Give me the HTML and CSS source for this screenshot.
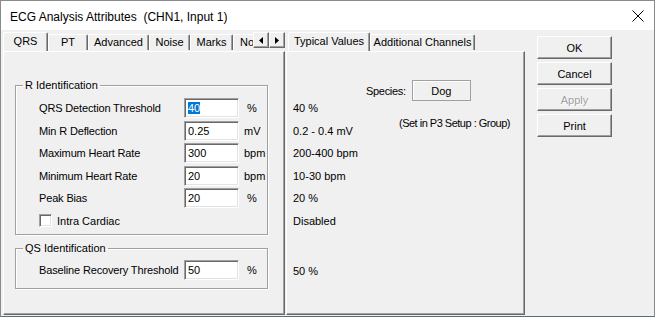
FILE: index.html
```html
<!DOCTYPE html>
<html lang="en">
<head>
    <meta charset="UTF-8">
    <title>ECG Analysis Attributes</title>
    <link rel="stylesheet" href="styles.css">
</head>
<body>
<div class="window">
    <div class="titlebar">
        <span class="title">ECG Analysis Attributes&nbsp; (CHN1, Input 1)</span>
        <svg class="close" width="12" height="12" viewBox="0 0 12 12">
            <path d="M0.5 0.5 L11.5 11.5 M11.5 0.5 L0.5 11.5" stroke="#000" stroke-width="1" fill="none"/>
        </svg>
    </div>

    <div class="client">
        <!-- left tab control: analysis settings -->
        <div class="tabctl tabctl-left">
            <div class="tabrow">
                <div class="tabstrip">
                    <div class="tab active t-qrs">QRS</div>
                    <div class="tab t-pt">PT</div>
                    <div class="tab t-adv">Advanced</div>
                    <div class="tab t-noise">Noise</div>
                    <div class="tab t-marks">Marks</div>
                    <div class="tab t-notes">No</div>
                </div>
                <div class="scroller">
                    <div class="arrow">
                        <svg width="5" height="7" viewBox="0 0 5 7"><path d="M4 0 L4 7 L0 3.5 Z" fill="#000"/></svg>
                    </div>
                    <div class="arrow">
                        <svg width="5" height="7" viewBox="0 0 5 7"><path d="M0 0 L0 7 L4 3.5 Z" fill="#000"/></svg>
                    </div>
                </div>
            </div>
            <div class="panel">
                <fieldset class="group group-r">
                    <legend>R Identification</legend>
                    <div class="row">
                        <span class="label">QRS Detection Threshold</span>
                        <div class="edit"><span class="sel">40</span></div>
                        <span class="unit pct">%</span>
                    </div>
                    <div class="row">
                        <span class="label">Min R Deflection</span>
                        <div class="edit">0.25</div>
                        <span class="unit">mV</span>
                    </div>
                    <div class="row">
                        <span class="label">Maximum Heart Rate</span>
                        <div class="edit">300</div>
                        <span class="unit">bpm</span>
                    </div>
                    <div class="row">
                        <span class="label">Minimum Heart Rate</span>
                        <div class="edit">20</div>
                        <span class="unit">bpm</span>
                    </div>
                    <div class="row">
                        <span class="label">Peak Bias</span>
                        <div class="edit">20</div>
                        <span class="unit pct">%</span>
                    </div>
                    <div class="row">
                        <span class="check"></span>
                        <span class="check-label">Intra Cardiac</span>
                    </div>
                </fieldset>

                <fieldset class="group group-qs">
                    <legend>QS Identification</legend>
                    <div class="row">
                        <span class="label">Baseline Recovery Threshold</span>
                        <div class="edit">50</div>
                        <span class="unit pct">%</span>
                    </div>
                </fieldset>
            </div>
        </div>

        <!-- right tab control: reference values -->
        <div class="tabctl tabctl-right">
            <div class="tabrow">
                <div class="tabstrip">
                    <div class="tab active t-typ">Typical Values</div>
                    <div class="tab t-add">Additional Channels</div>
                </div>
            </div>
            <div class="panel panel-right">
                <div class="values">
                    <div class="vrow">40 %</div>
                    <div class="vrow">0.2 - 0.4 mV</div>
                    <div class="vrow">200-400 bpm</div>
                    <div class="vrow">10-30 bpm</div>
                    <div class="vrow">20 %</div>
                    <div class="vrow">Disabled</div>
                    <div class="vrow vrow-qs">50 %</div>
                </div>
                <div class="species">
                    <div class="species-row">
                        <span>Species:</span>
                        <div class="species-box">Dog</div>
                    </div>
                    <div class="species-note">(Set in P3 Setup : Group)</div>
                </div>
            </div>
        </div>

        <div class="buttons">
            <button class="btn">OK</button>
            <button class="btn">Cancel</button>
            <button class="btn disabled">Apply</button>
            <button class="btn">Print</button>
        </div>
    </div>
</div>
</body>
</html>
```

FILE: styles.css
```css
* {
    box-sizing: border-box;
}
body {
    margin: 0;
    font-family: "Liberation Sans", Arial, sans-serif;
    font-size: 11px;
    color: #000;
    background: #f0f0f0;
}
.window {
    width: 655px;
    height: 317px;
    background: #f0f0f0;
    border: 1px solid #8a8a8a;
    border-bottom-color: #5c6a80;
    overflow: hidden;
}

/* title bar */
.titlebar {
    height: 29px;
    background: #fff;
    display: flex;
    align-items: center;
    justify-content: space-between;
    padding: 0 10px 0 9px;
}
.title {
    font-size: 12px;
    padding-top: 2px;
}
.close {
    margin-top: 1px;
}

.client {
    display: flex;
    padding: 2px 0 0 2px;
}

/* tab controls */
.tabctl {
    display: flex;
    flex-direction: column;
}
.tabctl-left {
    width: 282px;
}
.tabctl-right {
    width: 239px;
    margin-left: 1px;
}
.tabrow {
    display: flex;
    height: 19px;
    align-items: flex-end;
    position: relative;
    z-index: 1;
}
.tabstrip {
    display: flex;
    align-items: flex-end;
    flex: 1;
    overflow: hidden;
    height: 19px;
}
.tab {
    height: 16px;
    margin-bottom: 1px;
    padding-top: 1px;
    text-align: center;
    white-space: nowrap;
    overflow: hidden;
    flex: none;
    border-top: 1px solid #fff;
    border-left: 1px solid #fff;
    border-right: 1px solid #696969;
    box-shadow: inset -1px 0 #a0a0a0;
    border-radius: 2px 2px 0 0;
}
.tab.active {
    height: 19px;
    margin-bottom: 0;
    padding-top: 2px;
    background: #f0f0f0;
}
.t-qrs { width: 45px; }
.t-pt { width: 40px; }
.t-adv { width: 61px; }
.t-noise { width: 41px; }
.t-marks { width: 43px; }
.t-notes { width: 44px; text-align: left; padding-left: 6px; }
.t-typ { width: 82px; margin-left: 2px; }
.t-add { width: 105px; }

.scroller {
    display: flex;
    align-self: flex-start;
}
.arrow {
    width: 16px;
    height: 16px;
    display: flex;
    align-items: center;
    justify-content: center;
    background: #f0f0f0;
    border-top: 1px solid #fff;
    border-left: 1px solid #fff;
    border-right: 1px solid #696969;
    border-bottom: 1px solid #696969;
    box-shadow: inset -1px -1px #a0a0a0;
}

.panel {
    height: 264px;
    border-top: 1px solid #fff;
    border-left: 1px solid #fff;
    border-right: 1px solid #696969;
    border-bottom: 1px solid #696969;
    box-shadow: inset -1px -1px #a0a0a0;
    padding: 0 0 0 11px;
}

/* group boxes */
.group {
    margin: 0;
    width: 253px;
    border: 1px solid #a0a0a0;
    box-shadow: inset 1px 1px #fff, 1px 1px #fff;
    padding: 0 0 0 23px;
    min-inline-size: 0;
}
.group legend {
    line-height: 14px;
    padding: 0 2px;
    margin-left: -16px;
}
.group-r {
    margin-top: 26px;
    padding-top: 5px;
    padding-bottom: 2px;
}
.group-qs {
    margin-top: 6px;
    padding-top: 3.5px;
    padding-bottom: 7px;
}
.row {
    display: flex;
    align-items: center;
    height: 22.5px;
}
.label {
    width: 145px;
    white-space: nowrap;
    letter-spacing: -0.15px;
}
.edit {
    width: 55px;
    height: 20px;
    background: #fff;
    border-top: 1px solid #a0a0a0;
    border-left: 1px solid #a0a0a0;
    border-right: 1px solid #fff;
    border-bottom: 1px solid #fff;
    box-shadow: inset 1px 1px #696969, inset -1px -1px #e3e3e3;
    padding: 3px 0 0 3px;
    line-height: 13px;
}
.sel {
    background: #0078d7;
    color: #fff;
}
.unit {
    margin-left: 5px;
}
.unit.pct {
    margin-left: 8px;
}
.check {
    width: 13px;
    height: 13px;
    background: #fff;
    border-top: 1px solid #a0a0a0;
    border-left: 1px solid #a0a0a0;
    border-right: 1px solid #fff;
    border-bottom: 1px solid #fff;
    box-shadow: inset 1px 1px #696969, inset -1px -1px #e3e3e3;
}
.check-label {
    margin-left: 5px;
}

/* right panel */
.panel-right {
    display: flex;
    padding-left: 6px;
}
.values {
    width: 73px;
    padding-top: 45px;
}
.vrow {
    height: 22.5px;
    line-height: 22.5px;
    white-space: nowrap;
}
.vrow-qs {
    margin-top: 28px;
}
.species {
    padding-top: 28px;
}
.species-row {
    display: flex;
    align-items: center;
    letter-spacing: -0.3px;
}
.species-box {
    width: 59px;
    height: 21px;
    margin-left: 6px;
    border: 1px solid #a0a0a0;
    box-shadow: inset 1px 1px #fff;
    display: flex;
    align-items: center;
    justify-content: center;
    padding-top: 1px;
    letter-spacing: 0;
}
.species-note {
    margin: 16px 0 0 33px;
    white-space: nowrap;
    letter-spacing: -0.5px;
}

/* dialog buttons */
.buttons {
    display: flex;
    flex-direction: column;
    gap: 3px;
    margin: 4px 0 0 12px;
}
.btn {
    width: 75px;
    height: 23px;
    font-family: "Liberation Sans", Arial, sans-serif;
    font-size: 11px;
    color: #000;
    background: #f0f0f0;
    border-top: 1px solid #fff;
    border-left: 1px solid #fff;
    border-right: 1px solid #696969;
    border-bottom: 1px solid #696969;
    box-shadow: inset -1px -1px #a0a0a0;
    padding: 0;
}
.btn.disabled {
    color: #a0a0a0;
    text-shadow: 1px 1px #fff;
}
```
